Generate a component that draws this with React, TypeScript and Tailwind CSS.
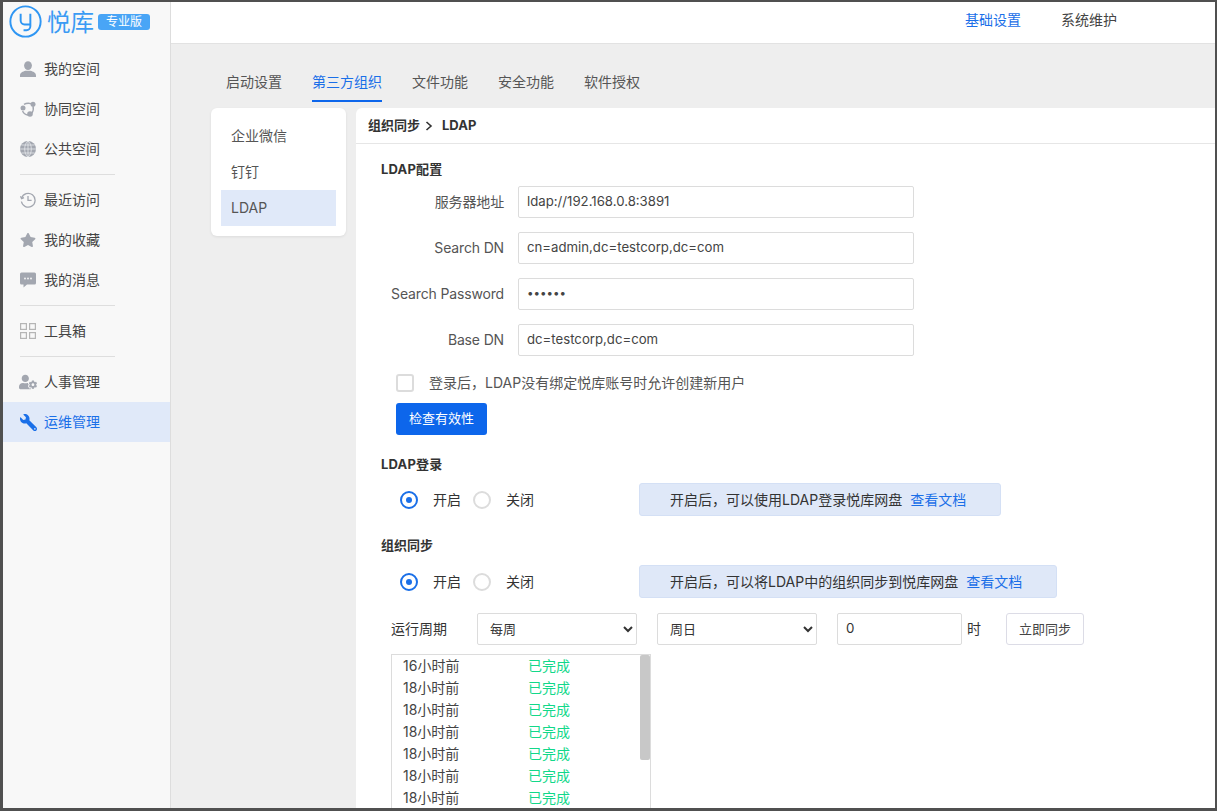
import { FaStar, FaUserCog, FaWrench } from "react-icons/fa";

const font = "font-['Inter','Noto_Sans_CJK_SC',sans-serif]";

const UserIcon = () => (
  <svg viewBox="0 0 16 16" className="w-4 h-4 text-[#a3a7b0]" fill="currentColor">
    <ellipse cx="8" cy="4.6" rx="3.9" ry="4.4" />
    <path d="M0 16 V14.4 C0 11.6 3 10.6 5.4 9.8 H10.6 C13 10.6 16 11.6 16 14.4 V16 Z" />
  </svg>
);

const ShareIcon = () => (
  <svg viewBox="0 0 16 16" className="w-4 h-4 text-[#a3a7b0]">
    <path d="M4 3.4 Q7 1.6 11 2.6 M13 5 Q14 9 12 12 M8 14 Q4 13.6 2.6 10" fill="none" stroke="currentColor" strokeWidth="1.4" />
    <circle cx="3" cy="7" r="2.5" fill="currentColor" />
    <circle cx="13" cy="3.2" r="2.5" fill="currentColor" />
    <circle cx="10" cy="13" r="2.8" fill="currentColor" />
  </svg>
);

const GlobeIcon = () => (
  <svg viewBox="0 0 16 16" className="w-4 h-4">
    <circle cx="8" cy="8" r="8" fill="#a3a7b0" />
    <path d="M8 0 V16 M0 8 H16 M1.4 4 H14.6 M1.4 12 H14.6 M8 0 C3.6 3 3.6 13 8 16 M8 0 C12.4 3 12.4 13 8 16" fill="none" stroke="#e6e8ec" strokeWidth="0.8" />
  </svg>
);

const HistoryIcon = () => (
  <svg viewBox="0 0 16 16" className="w-4 h-4 text-[#a3a7b0]" fill="none" stroke="currentColor" strokeWidth="1.3">
    <path d="M1.6 6.2 A6.9 6.9 0 1 1 1.4 9.5" />
    <path d="M0.4 4.2 L1.6 6.6 L4 5.6" />
    <path d="M8 4 V8.4 H11.6" />
  </svg>
);

const ChatIcon = () => (
  <svg viewBox="0 0 16 16" className="w-4 h-4 text-[#a3a7b0]">
    <path d="M1.5 0.5 H14.5 A1.5 1.5 0 0 1 16 2 V11 A1.5 1.5 0 0 1 14.5 12.5 H7 L3.5 15.5 V12.5 H1.5 A1.5 1.5 0 0 1 0 11 V2 A1.5 1.5 0 0 1 1.5 0.5 Z" fill="currentColor" />
    <circle cx="5" cy="6.5" r="0.9" fill="#f8f8f8" />
    <circle cx="8" cy="6.5" r="0.9" fill="#f8f8f8" />
    <circle cx="11" cy="6.5" r="0.9" fill="#f8f8f8" />
  </svg>
);

const GridIcon = () => (
  <svg viewBox="0 0 16 16" className="w-4 h-4 text-[#b5b5b5]" fill="none" stroke="currentColor" strokeWidth="1.2">
    <rect x="0.6" y="0.6" width="5.8" height="5.8" />
    <rect x="9.6" y="0.6" width="5.8" height="5.8" />
    <rect x="0.6" y="9.6" width="5.8" height="5.8" />
    <rect x="9.6" y="9.6" width="5.8" height="5.8" />
  </svg>
);

const NavItem = ({ icon, label, active }: { icon: React.ReactNode; label: string; active?: boolean }) => (
  <div className={`h-10 flex items-center pl-[17px] gap-2 text-sm ${active ? "bg-[#e0e9f9] text-[#1a6fe8]" : "text-[#444]"}`}>
    <span className="w-4 h-4 flex items-center justify-center">{icon}</span>
    <span>{label}</span>
  </div>
);

const Divider = () => <div className="h-px bg-[#dedede] my-[5px] ml-[17px] w-[95px]"></div>;

const Field = ({ label, value, small }: { label: string; value: string; small?: boolean }) => (
  <div className="flex items-center h-8">
    <label className="w-[123px] text-right text-sm text-[#555] tracking-[-0.15px]">{label}</label>
    <div className={`ml-[14px] w-[396px] h-8 border border-[#dcdcdc] rounded-[2px] pl-2 flex items-center text-[#444] ${small ? "text-[11.6px]" : "text-[13.2px]"}`}>{value}</div>
  </div>
);

const RadioRow = ({ tip, link, width }: { tip: string; link: string; width: string }) => (
  <div className="flex items-center h-[33px] pl-[19px] text-sm text-[#333]">
    <span className="w-[18px] h-[18px] rounded-full border-2 border-[#1a6fe8] flex items-center justify-center">
      <span className="w-[6px] h-[6px] rounded-full bg-[#1a6fe8]"></span>
    </span>
    <span className="ml-[15px] w-[28px]">开启</span>
    <span className="ml-3 w-[18px] h-[18px] rounded-full border-2 border-[#dcdcdc]"></span>
    <span className="ml-[15px] w-[28px]">关闭</span>
    <div className={`ml-[105px] h-[33px] ${width} bg-[#dfe8f8] border border-[#d4e0f5] rounded-[3px] pl-[30px] flex items-center text-sm text-[#333] whitespace-nowrap`}>
      <span>{tip}</span>
      <span className="ml-2 text-[#1a6fe8]">{link}</span>
    </div>
  </div>
);

const history = ["16小时前", "18小时前", "18小时前", "18小时前", "18小时前", "18小时前", "18小时前"];

export default function App() {
  return (
    <div className={`${font} w-[1217px] h-[811px] overflow-hidden border-t-2 border-l-[3px] border-r-2 border-b-[3px] border-[#505050] flex bg-[#eeeeee]`}>
      {/* Sidebar */}
      <aside className="w-[168px] shrink-0 h-full bg-[#f8f8f8] border-r border-[#dddddd]">
        <div className="h-[47px] flex items-start pl-[6px] pt-[3px]">
          <svg viewBox="0 0 34 34" className="w-[33px] h-[33px] text-[#2f96f3]" fill="none" stroke="currentColor" strokeWidth="2">
            <circle cx="17" cy="17" r="15.6" />
            <path d="M12 9 V16 A4 4 0 0 0 16 20 H22" />
            <path d="M22 9 V22 A4 4 0 0 1 18 26 H15" />
          </svg>
          <span className="ml-[5px] text-[23.5px] leading-[32px] text-[#3a9bf4] font-['Noto_Sans_CJK_SC',sans-serif]">悦库</span>
          <span className="ml-1 mt-[9px] w-[52px] h-4 rounded-[3px] bg-[#49a5f6] text-white text-[12px] leading-4 text-center">专业版</span>
        </div>
        <NavItem icon={<UserIcon />} label="我的空间" />
        <NavItem icon={<ShareIcon />} label="协同空间" />
        <NavItem icon={<GlobeIcon />} label="公共空间" />
        <Divider />
        <NavItem icon={<HistoryIcon />} label="最近访问" />
        <NavItem icon={<FaStar className="w-4 h-4 text-[#a3a7b0]" />} label="我的收藏" />
        <NavItem icon={<ChatIcon />} label="我的消息" />
        <Divider />
        <NavItem icon={<GridIcon />} label="工具箱" />
        <Divider />
        <NavItem icon={<FaUserCog className="w-[18px] h-[18px] shrink-0 text-[#a3a7b0]" />} label="人事管理" />
        <NavItem icon={<FaWrench className="w-[17px] h-[17px] shrink-0 text-[#1a6fe8] -scale-x-100" />} label="运维管理" active />
      </aside>

      <div className="flex-1 min-w-0 flex flex-col">
        {/* Top bar */}
        <div className="h-[42px] shrink-0 bg-white border-b border-[#e2e2e2] flex items-center justify-end text-sm text-[#444] pr-[98px] gap-10 pb-[5px]">
          <span className="text-[#1a6fe8]">基础设置</span>
          <span>系统维护</span>
        </div>

        {/* Tabs */}
        <div className="h-[64px] shrink-0 pl-[55px] pt-[20px] flex gap-[30px] text-sm text-[#555]">
          <span className="h-9 leading-9">启动设置</span>
          <span className="h-9 leading-9 text-[#1a6fe8]">
            第三方组织
            <span className="block h-[2px] bg-[#0d66eb]"></span>
          </span>
          <span className="h-9 leading-9">文件功能</span>
          <span className="h-9 leading-9">安全功能</span>
          <span className="h-9 leading-9">软件授权</span>
        </div>

        <div className="flex-1 min-h-0 flex items-start pl-[40px] gap-[10px]">
          {/* Sub menu */}
          <div className="w-[135px] bg-white rounded-md p-[10px] shadow-[0_1px_3px_rgba(0,0,0,0.08)] text-sm text-[#555]">
            <div className="h-9 leading-9 pl-[10px]">企业微信</div>
            <div className="h-9 leading-9 pl-[10px]">钉钉</div>
            <div className="h-9 leading-9 pl-[10px] bg-[#e0e9f9]">LDAP</div>
          </div>

          {/* Panel */}
          <div className="flex-1 min-w-0 h-[720px] bg-white rounded-tl-md">
            <div className="h-9 border-b border-[#e6e6e6] pl-3 flex items-center text-[13px] font-bold text-[#333]">
              组织同步
              <svg viewBox="0 0 8 10" className="w-[8px] h-[10px] ml-[5px] mr-[9px]" fill="none" stroke="#333" strokeWidth="1.6"><path d="M1.5 1 L6 5 L1.5 9" /></svg>
              LDAP
            </div>

            <div className="pl-[25px] pt-4">
              <h3 className="text-[13px] font-bold text-[#333] leading-[18px] tracking-[0.2px]">LDAP配置</h3>
              <div className="mt-[8px] flex flex-col gap-[14px]">
                <Field label="服务器地址" value="ldap://192.168.0.8:3891" />
                <Field label="Search DN" value="cn=admin,dc=testcorp,dc=com" />
                <Field label="Search Password" value="••••••" small />
                <Field label="Base DN" value="dc=testcorp,dc=com" />
              </div>

              <div className="mt-[18px] ml-[15px] flex items-center h-[18px]">
                <span className="w-[18px] h-[18px] rounded-[3px] border-2 border-[#dcdcdc] bg-white"></span>
                <span className="ml-[15px] text-sm text-[#555]">登录后，LDAP没有绑定悦库账号时允许创建新用户</span>
              </div>

              <button className="mt-[11px] ml-[15px] w-[91px] h-8 rounded-[3px] bg-[#0d66eb] text-white text-[13px] block">检查有效性</button>

              <h3 className="mt-[20px] text-[13px] font-bold text-[#333] leading-[18px] tracking-[0.2px]">LDAP登录</h3>
              <div className="mt-[10px]">
                <RadioRow tip="开启后，可以使用LDAP登录悦库网盘" link="查看文档" width="w-[362px]" />
              </div>

              <h3 className="mt-[20px] text-[13px] font-bold text-[#333] leading-[18px]">组织同步</h3>
              <div className="mt-[11px]">
                <RadioRow tip="开启后，可以将LDAP中的组织同步到悦库网盘" link="查看文档" width="w-[418px]" />
              </div>

              <div className="mt-[15px] flex items-center ml-[10px] h-8 text-sm text-[#333]">
                <span className="w-[86px] pb-[1px]">运行周期</span>
                <select defaultValue="每周" className="w-[160px] h-8 border border-[#dcdcdc] rounded-[2px] bg-white pl-[8px] text-[13px] text-[#333]">
                  <option>每周</option>
                </select>
                <select defaultValue="周日" className="ml-5 w-[160px] h-8 border border-[#dcdcdc] rounded-[2px] bg-white pl-[8px] text-[13px] text-[#333]">
                  <option>周日</option>
                </select>
                <div className="ml-5 w-[125px] h-8 border border-[#dcdcdc] rounded-[2px] pl-2 flex items-center text-[13.33px]">0</div>
                <span className="ml-[5px] w-[14px]">时</span>
                <button className="ml-[25px] w-[78px] h-8 border border-[#dcdce6] rounded-[3px] bg-white text-[13px] text-[#444]">立即同步</button>
              </div>

              <div className="mt-[9px] ml-[10px] w-[260px] h-[170px] border border-[#dcdcdc] flex text-sm">
                <div className="flex-1">
                  {history.map((t, i) => (
                    <div key={i} className="h-[22px] flex items-center pl-[11px]">
                      <span className="w-[126px] text-[#444]">{t}</span>
                      <span className="text-[#12d88a] -ml-px">已完成</span>
                    </div>
                  ))}
                </div>
                <div className="w-[10px]">
                  <div className="h-[105px] bg-[#c8c8c8] rounded-[2px]"></div>
                </div>
              </div>
            </div>
          </div>
        </div>
      </div>
    </div>
  );
}
